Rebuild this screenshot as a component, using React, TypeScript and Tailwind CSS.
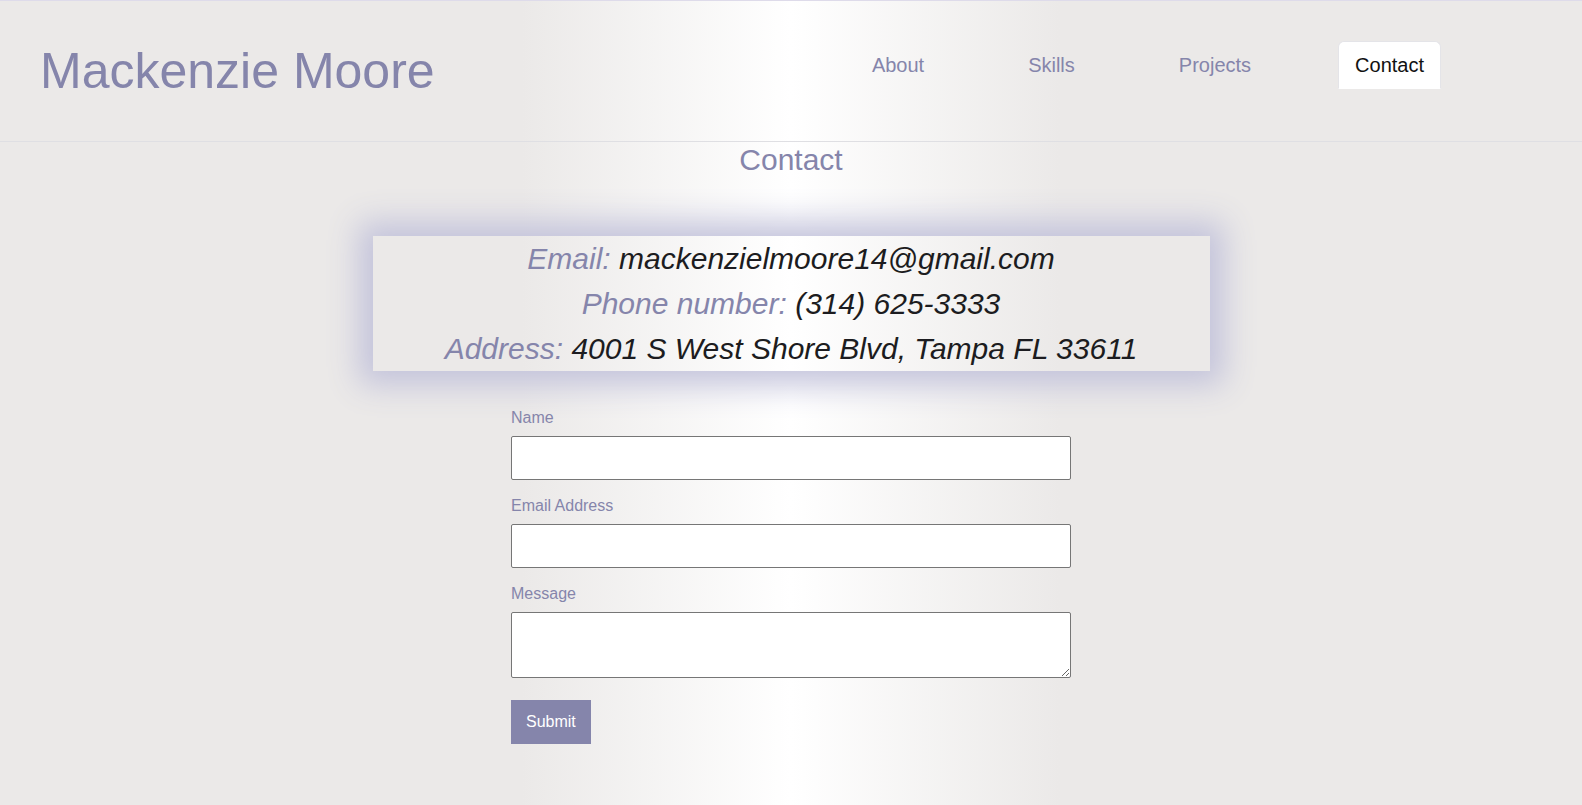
export default function App() {
    const nav = ["About", "Skills", "Projects", "Contact"];
    const active = "Contact";

    return (
        <div className="min-h-screen font-['Liberation_Sans',Arial,sans-serif] bg-[linear-gradient(to_right,#ebe9e8_33%,#ffffff_50%,#ebe9e8_67%)] border-t border-[#dedbea]">
            <header className="h-[141px] flex items-center justify-between pl-[40px] pr-[141px] border-b border-[#dfdfe3]">
                <h1 className="text-[50px] leading-[1.2] text-[#8585ab]">Mackenzie Moore</h1>

                <nav className="flex items-center gap-[70px] mb-[13px]">
                    {nav.map((item) => (
                        <a
                            key={item}
                            className={`px-4 py-2 text-[20px] leading-[30px] border rounded-t-[6px] cursor-pointer
                                ${active === item
                                    ? "bg-white text-[#111] border-[#e4e4e8] border-b-white"
                                    : "text-[#8585ab] border-transparent"
                                }`}
                        >
                            {item}
                        </a>
                    ))}
                </nav>
            </header>

            <main className="flex flex-col items-center">
                <h2 className="text-[30px] leading-[1.2] text-[#8585ab]">Contact</h2>

                <div className="w-[837px] mt-[58px] text-center italic text-[30px] leading-[1.5] text-[#1c1c20] shadow-[0_0_30px_14px_#c3c3db]">
                    <p><span className="text-[#8585ab]">Email:</span> mackenzielmoore14@gmail.com</p>
                    <p><span className="text-[#8585ab]">Phone number:</span> (314) 625-3333</p>
                    <p><span className="text-[#8585ab]">Address:</span> 4001 S West Shore Blvd, Tampa FL 33611</p>
                </div>

                <form className="w-[560px] mt-[35px]">
                    <div className="mb-[14px]">
                        <label className="block text-[16px] leading-[24px] text-[#8585ab] mb-[6px]">Name</label>
                        <input className="block w-full h-[44px] bg-white border border-[#767676] rounded-[2px]" />
                    </div>
                    <div className="mb-[14px]">
                        <label className="block text-[16px] leading-[24px] text-[#8585ab] mb-[6px]">Email Address</label>
                        <input className="block w-full h-[44px] bg-white border border-[#767676] rounded-[2px]" />
                    </div>
                    <div className="mb-[22px]">
                        <label className="block text-[16px] leading-[24px] text-[#8585ab] mb-[6px]">Message</label>
                        <textarea className="block w-full h-[66px] bg-white border border-[#767676] rounded-[2px]" />
                    </div>
                    <button type="button" className="bg-[#8585ab] text-white text-[16px] leading-[24px] px-[15px] py-[10px]">
                        Submit
                    </button>
                </form>
            </main>
        </div>
    );
}
